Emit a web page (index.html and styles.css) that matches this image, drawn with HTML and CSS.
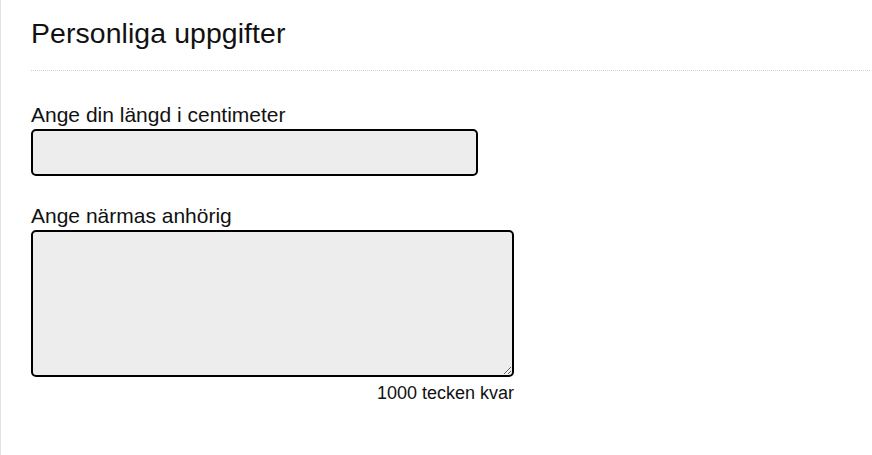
FILE: index.html
```html
<!DOCTYPE html>
<html lang="sv">
<head>
<meta charset="utf-8">
<title>Personliga uppgifter</title>
<link rel="stylesheet" href="styles.css">
</head>
<body>
<main class="page">
  <h1 class="title">Personliga uppgifter</h1>
  <form class="form">
    <div class="field">
      <label class="label" for="height">Ange din längd i centimeter</label>
      <input class="input" id="height" type="text">
    </div>
    <div class="field field-wide">
      <label class="label" for="kin">Ange närmas anhörig</label>
      <textarea class="textarea" id="kin"></textarea>
      <div class="counter">1000 tecken kvar</div>
    </div>
  </form>
</main>
</body>
</html>
```
FILE: styles.css
```css
html, body {
  margin: 0;
  padding: 0;
  background: #fff;
}
body {
  font-family: "Liberation Sans", Arial, sans-serif;
  color: #111;
}
.page {
  box-sizing: border-box;
  min-height: 100vh;
  border-left: 1px solid #e3e3e3;
  padding: 17px 2px 0 30px;
}
.title {
  margin: 0;
  font-size: 28.4px;
  font-weight: 400;
  line-height: 32px;
  padding-bottom: 21px;
  border-bottom: 1px dotted #cfcfcf;
  letter-spacing: 0.1px;
}
.form {
  display: flex;
  flex-direction: column;
  gap: 28px;
  padding-top: 32px;
}
.field {
  display: flex;
  flex-direction: column;
  width: 447px;
}
.field-wide {
  width: 483px;
}
.label {
  font-size: 21px;
  line-height: 23px;
  margin-bottom: 3px;
}
.input, .textarea {
  box-sizing: border-box;
  display: block;
  width: 100%;
  margin: 0;
  border: 2px solid #000;
  border-radius: 5px;
  background: #ededed;
  font: inherit;
}
.input {
  height: 47px;
}
.textarea {
  height: 147px;
  resize: vertical;
}
.counter {
  align-self: flex-end;
  font-size: 18px;
  line-height: 21px;
  margin-top: 6px;
}
```
